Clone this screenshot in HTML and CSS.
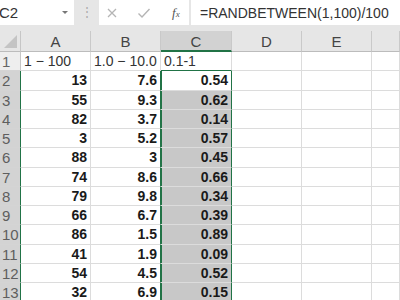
FILE: index.html
```html
<!DOCTYPE html>
<html>
<head>
<meta charset="utf-8">
<link rel="stylesheet" href="styles.css">
</head>
<body>
<div class="topbar">
  <div class="namebox"><span class="name">C2</span><span class="caret"></span></div>
  <div class="sep">⋮</div>
  <div class="fbtns">
    <svg class="ico" width="12" height="12" viewBox="0 0 12 12"><path d="M2 2 L10 10 M10 2 L2 10" stroke="#b5b5b5" stroke-width="1.3" fill="none"/></svg>
    <svg class="ico" width="14" height="12" viewBox="0 0 14 12"><path d="M1.5 6.5 L5 10 L12.5 2" stroke="#b5b5b5" stroke-width="1.4" fill="none"/></svg>
    <span class="fx">f<span class="fxx">x</span></span>
  </div>
  <div class="finput">=RANDBETWEEN(1,100)/100</div>
</div>
<div class="sheet">
  <div class="corner"><span class="tri"></span></div>
  <div class="ch">A</div><div class="ch">B</div><div class="ch sel">C</div><div class="ch">D</div><div class="ch">E</div><div class="ch"></div>

  <div class="rh">1</div><div class="c t">1 − 100</div><div class="c t">1.0 − 10.0</div><div class="c t ctop">0.1-1</div><div class="c"></div><div class="c"></div><div class="c"></div>

  <div class="rh on">2</div><div class="c n">13</div><div class="c n bsel">7.6</div><div class="c n csel act">0.54</div><div class="c"></div><div class="c"></div><div class="c"></div>
  <div class="rh on">3</div><div class="c n">55</div><div class="c n bsel">9.3</div><div class="c n csel">0.62</div><div class="c"></div><div class="c"></div><div class="c"></div>
  <div class="rh on">4</div><div class="c n">82</div><div class="c n bsel">3.7</div><div class="c n csel">0.14</div><div class="c"></div><div class="c"></div><div class="c"></div>
  <div class="rh on">5</div><div class="c n">3</div><div class="c n bsel">5.2</div><div class="c n csel">0.57</div><div class="c"></div><div class="c"></div><div class="c"></div>
  <div class="rh on">6</div><div class="c n">88</div><div class="c n bsel">3</div><div class="c n csel">0.45</div><div class="c"></div><div class="c"></div><div class="c"></div>
  <div class="rh on">7</div><div class="c n">74</div><div class="c n bsel">8.6</div><div class="c n csel">0.66</div><div class="c"></div><div class="c"></div><div class="c"></div>
  <div class="rh on">8</div><div class="c n">79</div><div class="c n bsel">9.8</div><div class="c n csel">0.34</div><div class="c"></div><div class="c"></div><div class="c"></div>
  <div class="rh on">9</div><div class="c n">66</div><div class="c n bsel">6.7</div><div class="c n csel">0.39</div><div class="c"></div><div class="c"></div><div class="c"></div>
  <div class="rh on">10</div><div class="c n">86</div><div class="c n bsel">1.5</div><div class="c n csel">0.89</div><div class="c"></div><div class="c"></div><div class="c"></div>
  <div class="rh on">11</div><div class="c n">41</div><div class="c n bsel">1.9</div><div class="c n csel">0.09</div><div class="c"></div><div class="c"></div><div class="c"></div>
  <div class="rh on">12</div><div class="c n">54</div><div class="c n bsel">4.5</div><div class="c n csel">0.52</div><div class="c"></div><div class="c"></div><div class="c"></div>
  <div class="rh on">13</div><div class="c n">32</div><div class="c n bsel">6.9</div><div class="c n csel">0.15</div><div class="c"></div><div class="c"></div><div class="c"></div>
</div>
</body>
</html>
```

FILE: styles.css
```css
* { box-sizing: border-box; }
html, body { margin: 0; padding: 0; }
body {
  width: 400px;
  height: 300px;
  overflow: hidden;
  background: #e6e6e6;
  font-family: "Liberation Sans", Arial, sans-serif;
}
.topbar {
  display: flex;
  height: 31px;
  padding-bottom: 6px;
  background: #e6e6e6;
}
.namebox {
  width: 74px;
  background: #fff;
  display: flex;
  align-items: center;
  justify-content: space-between;
  padding-right: 6px;
}
.name {
  font-size: 15px;
  color: #333;
  margin-left: -1px;
}
.caret {
  width: 0;
  height: 0;
  border-left: 3px solid transparent;
  border-right: 3px solid transparent;
  border-top: 3px solid #777;
}
.sep {
  width: 25px;
  display: flex;
  align-items: center;
  justify-content: center;
  color: #aaa;
  font-size: 12px;
  padding-bottom: 2px;
}
.fbtns {
  width: 90px;
  background: #fff;
  display: flex;
  align-items: center;
  padding-left: 7px;
  gap: 19px;
}
.fx {
  font-family: "Liberation Serif", serif;
  font-style: italic;
  font-size: 13px;
  color: #555;
  margin-left: 2px;
}
.fxx { font-size: 9px; }
.finput {
  flex: 1;
  margin-left: 2px;
  background: #fff;
  font-size: 14px;
  color: #333;
  display: flex;
  align-items: center;
  padding-left: 9px;
}
.sheet {
  display: grid;
  grid-template-columns: 21px 70px 70px 71px 70px 70px minmax(0, 1fr);
  grid-template-rows: 21px repeat(13, 19.25px);
  background: #fff;
}
.corner {
  background: #e6e6e6;
  border-right: 1px solid #c6c6c6;
  border-bottom: 1px solid #bcbcbc;
  position: relative;
}
.tri {
  position: absolute;
  right: 3px;
  bottom: 3px;
  width: 0;
  height: 0;
  border-left: 13px solid transparent;
  border-bottom: 13px solid #c4c4c4;
}
.ch {
  background: #e6e6e6;
  border-right: 1px solid #c9c9c9;
  border-bottom: 1px solid #bcbcbc;
  text-align: center;
  font-size: 15px;
  line-height: 21px;
  color: #444;
}
.ch.sel {
  background: #d2d2d2;
  border-bottom: 2px solid #217346;
}
.rh {
  background: #eeeeee;
  border-right: 1px solid #c6c6c6;
  border-bottom: 1px solid #d4d4d4;
  font-size: 15px;
  color: #666;
  padding-left: 2px;
  line-height: 19px;
  overflow: hidden;
  white-space: nowrap;
}
.rh.on {
  background: #d3d3d3;
  border-right: 1px solid #217346;
  color: #5e5e5e;
}
.c {
  border-right: 1px solid #dcdcdc;
  border-bottom: 1px solid #dcdcdc;
  font-size: 14px;
  line-height: 19px;
  color: #222;
  white-space: nowrap;
  overflow: hidden;
}
.c.t {
  padding-left: 3px;
  color: #333;
}
.c.n {
  text-align: right;
  padding-right: 3px;
  font-weight: bold;
  font-size: 14px;
  color: #1a1a1a;
}
.c.ctop { border-bottom: 1px solid #217346; }
.c.bsel { border-right: 1px solid #217346; }
.c.csel {
  background: #c8c8c8;
  border-right: 1px solid #217346;
  box-shadow: inset 1px 0 0 #217346;
}
.c.csel.act { background: #fff; }
```
